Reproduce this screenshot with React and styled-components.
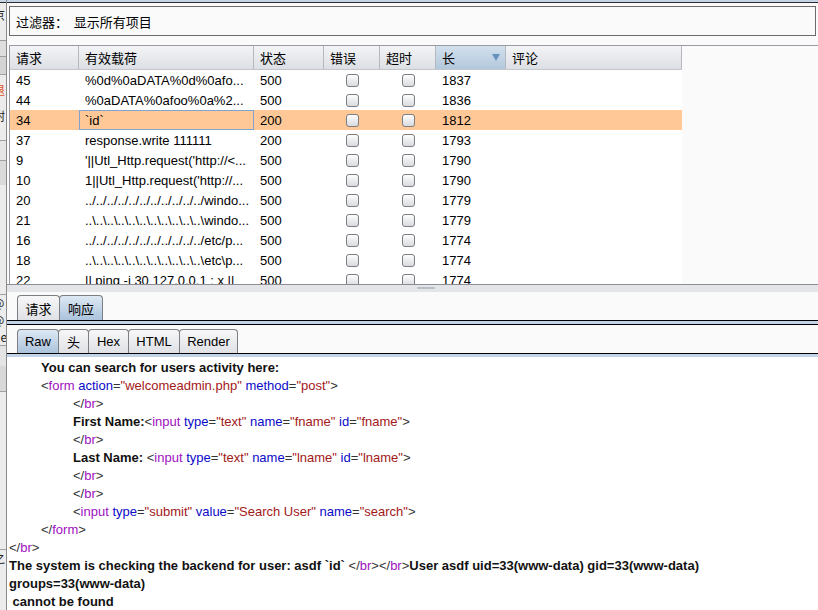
import React from 'react';
import styled, { createGlobalStyle } from 'styled-components';

const GlobalStyle = createGlobalStyle`
  html, body {
    margin: 0;
    padding: 0;
    width: 818px;
    height: 610px;
    overflow: hidden;
    background: #fafafa;
  }
  body {
    font-family: "Liberation Sans", Arial, "Noto Sans CJK SC", sans-serif;
    font-size: 13px;
    color: #000;
  }
`;

const Shell = styled.div`
  display: flex;
  width: 818px;
  height: 610px;
  overflow: hidden;
`;

const LeftStrip = styled.div`
  width: 7px;
  flex: none;
  box-sizing: border-box;
  background: #ececec;
  border-right: 1px solid #8a8a8a;
  overflow: hidden;
  display: flex;
  flex-direction: column;
`;

const StripPiece = styled.div`
  height: ${({ h }) => h}px;
  flex: none;
  box-sizing: border-box;
  overflow: hidden;
  background: ${({ bg }) => bg || 'transparent'};
  border-bottom: ${({ line }) => (line ? `1px solid ${line}` : 'none')};
  color: ${({ color }) => color || '#222'};
  font-family: "Noto Sans CJK SC", sans-serif;
  font-size: 12px;
  line-height: ${({ h }) => Math.min(h, 14)}px;
  padding-top: ${({ h }) => Math.max(0, Math.floor((h - 14) / 2))}px;
  white-space: nowrap;
  text-indent: -7px;
`;

const Main = styled.div`
  flex: 1;
  min-width: 0;
  display: flex;
  flex-direction: column;
  background: #fafafa;
`;

const TopStrip = styled.div`
  height: 3px;
  flex: none;
  box-sizing: border-box;
  background: #c5d5e6;
  border-bottom: 1px solid #2e2e2e;
`;

const FilterBox = styled.div`
  margin: 3px 2px 0 2px;
  height: 30px;
  flex: none;
  box-sizing: border-box;
  border: 1px solid #6b6b6b;
  background: #fafafa;
  padding-left: 6px;
  display: flex;
  align-items: center;
  font-family: "Noto Sans CJK SC", sans-serif;
  font-size: 13px;
  white-space: pre;
`;

const TablePane = styled.div`
  margin: 9px 0 0 2px;
  height: 239px;
  flex: none;
  box-sizing: border-box;
  border-top: 1px solid #9a9aa2;
  border-left: 1px solid #9a9aa2;
  background: #fafafa;
  overflow: hidden;
`;

const COLS = '69px 175px 70px 56px 56px 70px 176px';

const HeaderRow = styled.div`
  display: grid;
  grid-template-columns: ${COLS};
  width: 672px;
  height: 24px;
  box-sizing: border-box;
  border-bottom: 1px solid #c4c6cc;
`;

const HeadCell = styled.div`
  box-sizing: border-box;
  padding-left: 6px;
  padding-right: 6px;
  display: flex;
  align-items: center;
  justify-content: space-between;
  border-right: 1px solid #b6b8c0;
  background: ${({ sorted }) =>
    sorted
      ? 'linear-gradient(#d3e0ec, #b2c8dc)'
      : 'linear-gradient(#f3f4f6, #dcdfe4)'};
  font-family: "Noto Sans CJK SC", sans-serif;
  font-size: 13px;
`;

const SortArrow = styled.span`
  width: 0;
  height: 0;
  border-left: 4px solid transparent;
  border-right: 4px solid transparent;
  border-top: 7px solid #6592c0;
  margin-right: -1px;
`;

const Row = styled.div`
  display: grid;
  grid-template-columns: ${COLS};
  width: 672px;
  height: 20px;
  background: ${({ selected }) => (selected ? '#ffc896' : '#ffffff')};
`;

const Cell = styled.div`
  box-sizing: border-box;
  display: flex;
  align-items: center;
  justify-content: ${({ center }) => (center ? 'center' : 'flex-start')};
  white-space: pre;
  overflow: hidden;
  border: ${({ focus }) => (focus ? '1px solid #7fa4d2' : 'none')};
  padding-left: ${({ focus, center }) => (center ? '0' : focus ? '5px' : '6px')};
`;

const Check = styled.span`
  width: 13px;
  height: 13px;
  box-sizing: border-box;
  border: 1px solid #7b7d82;
  border-radius: 3px;
  background: linear-gradient(#fdfdfd, #d9dbdf);
`;

const Divider = styled.div`
  height: 8px;
  flex: none;
  box-sizing: border-box;
  border-top: 1px solid #8c8c94;
  background: #e3e5e9;
  display: flex;
`;

const Grip = styled.span`
  width: 18px;
  height: 2px;
  margin: 2px 0 0 410px;
  background: #b9bdc5;
  border-radius: 1px;
`;

const TabBar = styled.div`
  height: ${({ h }) => h}px;
  flex: none;
  box-sizing: border-box;
  padding-left: 10px;
  display: flex;
  align-items: flex-end;
`;

const Tab = styled.div`
  width: ${({ w }) => w}px;
  height: ${({ h }) => h}px;
  box-sizing: border-box;
  margin-left: -1px;
  border: 1px solid #7c7e84;
  border-bottom: none;
  border-radius: 4px 4px 0 0;
  background: ${({ active }) =>
    active
      ? 'linear-gradient(#dde8f3, #abc3dc)'
      : 'linear-gradient(#f7f7f8, #dfe1e5)'};
  display: flex;
  align-items: center;
  justify-content: center;
  font-family: "Liberation Sans", Arial, "Noto Sans CJK SC", sans-serif;
  font-size: 13px;
  &:first-child {
    margin-left: 0;
  }
`;

const Rule = styled.div`
  height: ${({ closed }) => (closed ? 5 : 4)}px;
  flex: none;
  box-sizing: border-box;
  background: #c2d4e7;
  border-top: 1px solid #000;
  border-bottom: ${({ closed }) => (closed ? '1px solid #000' : 'none')};
`;

const Content = styled.div`
  flex: 1;
  background: #ffffff;
  padding: 2px 0 0 2px;
  overflow: hidden;
`;

const Line = styled.div`
  height: 18px;
  line-height: 18px;
  padding-left: ${({ indent }) => indent * 32}px;
  white-space: pre;
  font-size: 13px;
  color: #222;
`;

const B = styled.span`
  font-weight: bold;
  color: #111;
`;

const TagName = styled.span`
  color: #a010c0;
`;

const AttrName = styled.span`
  color: #0a0ac8;
`;

const AttrValue = styled.span`
  color: #a31818;
`;

const Punct = styled.span`
  color: #333;
`;

const HtmlTag = ({ name, close, attrs = [] }) => (
  <>
    <Punct>{close ? '</' : '<'}</Punct>
    <TagName>{name}</TagName>
    {attrs.map(([k, v]) => (
      <React.Fragment key={k}>
        {' '}
        <AttrName>{k}</AttrName>
        <Punct>=</Punct>
        <AttrValue>"{v}"</AttrValue>
      </React.Fragment>
    ))}
    <Punct>&gt;</Punct>
  </>
);

const headers = ['请求', '有效载荷', '状态', '错误', '超时', '长', '评论'];

const up = '../'.repeat(11);
const back = '..\\'.repeat(11);

const rows = [
  ['45', '%0d%0aDATA%0d%0afo...', '500', '1837'],
  ['44', '%0aDATA%0afoo%0a%2...', '500', '1836'],
  ['34', '`id`', '200', '1812', true],
  ['37', 'response.write 111111', '200', '1793'],
  ['9', "'||Utl_Http.request('http://<...", '500', '1790'],
  ['10', "1||Utl_Http.request('http://...", '500', '1790'],
  ['20', `${up}windo...`, '500', '1779'],
  ['21', `${back}windo...`, '500', '1779'],
  ['16', `${up}etc/p...`, '500', '1774'],
  ['18', `${back}etc\\p...`, '500', '1774'],
  ['22', '|| ping -i 30 127.0.0.1 ; x ||', '500', '1774'],
];

const strip = [
  { h: 3, bg: '#c5d5e6', line: '#2e2e2e' },
  { h: 24, text: '京' },
  { h: 14, line: '#9a9a9a' },
  { h: 16, bg: '#dedede', line: '#a0a0a0' },
  { h: 18, bg: '#d4d4d4', line: '#a0a0a0' },
  { h: 30, text: '退', color: '#e0501c' },
  { h: 22, text: '附' },
  { h: 14, line: '#a0a0a0' },
  { h: 20, bg: '#e6e6e6', line: '#a0a0a0' },
  { h: 24, bg: '#dadada' },
  { h: 18, text: '|', color: '#3a6fb0' },
  { h: 92, line: '#a0a0a0' },
  { h: 17, text: '@' },
  { h: 17, text: '@' },
  { h: 17, text: 'de', line: '#a0a0a0' },
  { h: 20, bg: '#e4e4e4' },
  { h: 26, bg: '#d8d8d8', line: '#a0a0a0' },
  { h: 158, line: '#a0a0a0' },
  { h: 16, text: '之' },
  { h: 20, text: '|' },
];

const App = () => (
  <>
    <GlobalStyle />
    <Shell>
      <LeftStrip>
        {strip.map((s, i) => (
          <StripPiece key={i} h={s.h} bg={s.bg} line={s.line} color={s.color}>
            {s.text}
          </StripPiece>
        ))}
      </LeftStrip>
      <Main>
        <TopStrip />
        <FilterBox>过滤器：  显示所有项目</FilterBox>
        <TablePane>
          <HeaderRow>
            {headers.map((h) => (
              <HeadCell key={h} sorted={h === '长'}>
                {h}
                {h === '长' && <SortArrow />}
              </HeadCell>
            ))}
          </HeaderRow>
          {rows.map(([id, payload, status, len, selected]) => (
            <Row key={id} selected={selected}>
              <Cell>{id}</Cell>
              <Cell focus={selected}>{payload}</Cell>
              <Cell>{status}</Cell>
              <Cell center>
                <Check />
              </Cell>
              <Cell center>
                <Check />
              </Cell>
              <Cell>{len}</Cell>
              <Cell />
            </Row>
          ))}
        </TablePane>
        <Divider>
          <Grip />
        </Divider>
        <TabBar h={28}>
          <Tab w={43} h={25}>请求</Tab>
          <Tab w={44} h={25} active>响应</Tab>
        </TabBar>
        <Rule closed />
        <TabBar h={28}>
          <Tab w={42} h={24} active>Raw</Tab>
          <Tab w={31} h={24}>头</Tab>
          <Tab w={41} h={24}>Hex</Tab>
          <Tab w={52} h={24}>HTML</Tab>
          <Tab w={59} h={24}>Render</Tab>
        </TabBar>
        <Rule />
        <Content>
          <Line indent={1}>
            <B>You can search for users activity here:</B>
          </Line>
          <Line indent={1}>
            <HtmlTag name="form" attrs={[['action', 'welcomeadmin.php'], ['method', 'post']]} />
          </Line>
          <Line indent={2}>
            <HtmlTag name="br" close />
          </Line>
          <Line indent={2}>
            <B>First Name:</B>
            <HtmlTag name="input" attrs={[['type', 'text'], ['name', 'fname'], ['id', 'fname']]} />
          </Line>
          <Line indent={2}>
            <HtmlTag name="br" close />
          </Line>
          <Line indent={2}>
            <B>Last Name: </B>
            <HtmlTag name="input" attrs={[['type', 'text'], ['name', 'lname'], ['id', 'lname']]} />
          </Line>
          <Line indent={2}>
            <HtmlTag name="br" close />
          </Line>
          <Line indent={2}>
            <HtmlTag name="br" close />
          </Line>
          <Line indent={2}>
            <HtmlTag name="input" attrs={[['type', 'submit'], ['value', 'Search User'], ['name', 'search']]} />
          </Line>
          <Line indent={1}>
            <HtmlTag name="form" close />
          </Line>
          <Line indent={0}>
            <HtmlTag name="br" close />
          </Line>
          <Line indent={0}>
            <B>The system is checking the backend for user: asdf `id` </B>
            <HtmlTag name="br" close />
            <HtmlTag name="br" close />
            <B>User asdf uid=33(www-data) gid=33(www-data)</B>
          </Line>
          <Line indent={0}>
            <B>groups=33(www-data)</B>
          </Line>
          <Line indent={0}>
            <B> cannot be found</B>
          </Line>
        </Content>
      </Main>
    </Shell>
  </>
);

export default App;
